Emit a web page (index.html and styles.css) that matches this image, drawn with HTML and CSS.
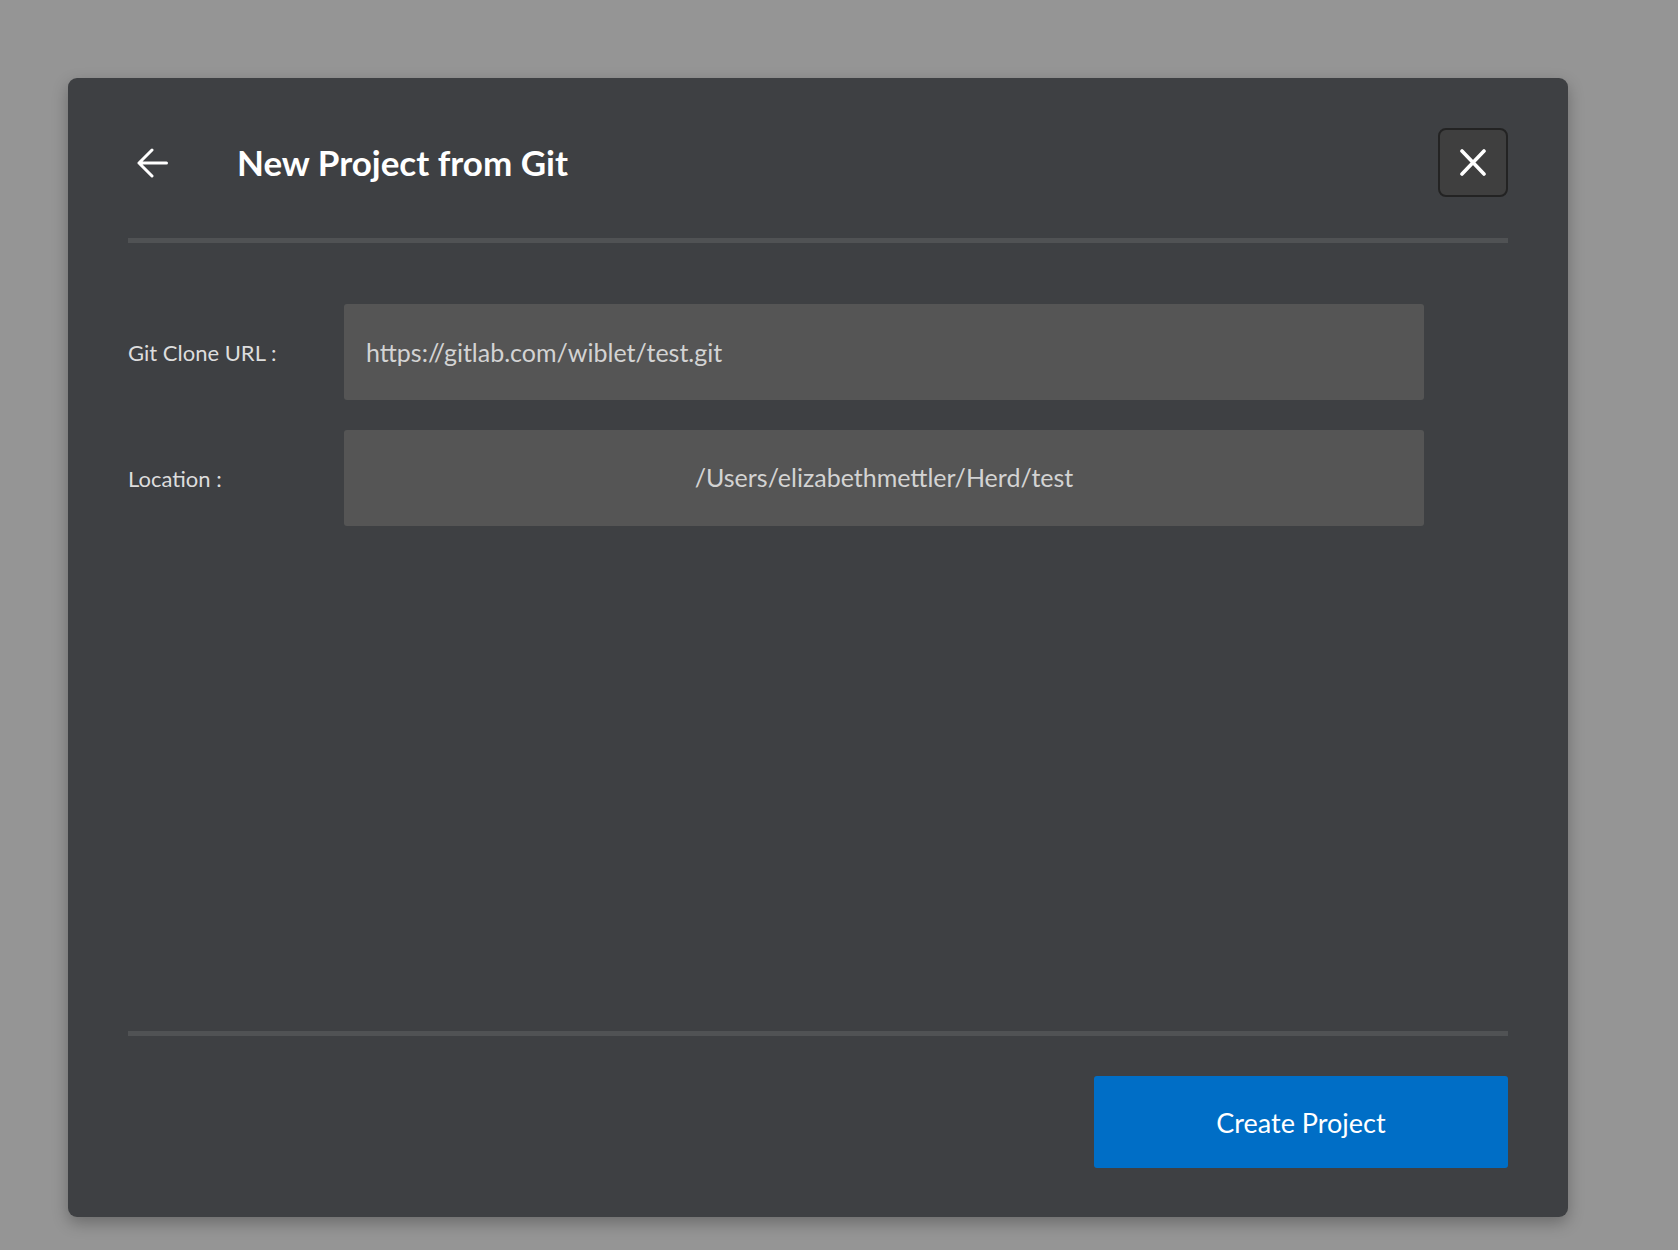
FILE: index.html
```html
<!DOCTYPE html>
<html lang="en">
<head>
<meta charset="utf-8">
<title>New Project from Git</title>
<link rel="stylesheet" href="styles.css">
</head>
<body>
<div class="modal">
  <div class="header">
    <button class="back" aria-label="Back">
      <svg width="31" height="30" viewBox="0 0 31 30"><path d="M2 15 H29.5 M15 2 L2 15 L15 28" fill="none" stroke="#ffffff" stroke-width="3" stroke-linecap="round" stroke-linejoin="round"/></svg>
    </button>
    <h1 class="title">New Project from Git</h1>
    <button class="close" aria-label="Close">
      <svg width="26" height="27" viewBox="0 0 26 27"><path d="M2 2 L24 25 M24 2 L2 25" fill="none" stroke="#ffffff" stroke-width="3.6" stroke-linecap="round"/></svg>
    </button>
  </div>
  <div class="divider top-divider"></div>
  <div class="form">
    <div class="row">
      <label class="label">Git Clone URL :</label>
      <div class="field">https://gitlab.com/wiblet/test.git</div>
    </div>
    <div class="row">
      <label class="label">Location :</label>
      <div class="field center">/Users/elizabethmettler/Herd/test</div>
    </div>
  </div>
  <div class="divider bottom-divider"></div>
  <div class="footer">
    <button class="create">Create Project</button>
  </div>
</div>
</body>
</html>
```
FILE: styles.css
```css
html, body {
  margin: 0;
  padding: 0;
  background: #959595;
  font-family: "Lato", "Open Sans", sans-serif;
}
body {
  padding-top: 78px;
  padding-left: 68px;
  height: 1250px;
  box-sizing: border-box;
  overflow: hidden;
}
.modal {
  width: 1500px;
  height: 1139px;
  box-sizing: border-box;
  background: #3e4043;
  border-radius: 9px;
  box-shadow: 0 6px 16px rgba(0, 0, 0, 0.28);
  padding: 50px 60px 49px 60px;
  display: flex;
  flex-direction: column;
}
.header {
  display: flex;
  align-items: center;
  height: 69px;
}
.back {
  background: none;
  border: 0;
  padding: 0;
  margin-left: 9px;
  width: 31px;
  height: 30px;
  display: flex;
  cursor: pointer;
}
.title {
  margin: -2px 0 0 69px;
  font-size: 35px;
  font-weight: 700;
  color: #ffffff;
  flex: 1;
  letter-spacing: 0;
}
.close {
  width: 70px;
  height: 69px;
  box-sizing: border-box;
  background: #3f3f3f;
  border: 2px solid #232323;
  border-radius: 8px;
  display: flex;
  align-items: center;
  justify-content: center;
  padding: 0;
  cursor: pointer;
}
.divider {
  height: 5px;
  background: #505254;
  flex: none;
}
.top-divider {
  margin-top: 41px;
}
.form {
  margin-top: 61px;
  display: flex;
  flex-direction: column;
  gap: 30px;
  flex: 1;
}
.row {
  display: flex;
  align-items: center;
}
.label {
  width: 216px;
  flex: none;
  color: #dddddd;
  font-size: 22px;
}
.field {
  width: 1080px;
  height: 96px;
  box-sizing: border-box;
  background: #555555;
  border-radius: 3px;
  padding: 0 22px;
  display: flex;
  align-items: center;
  color: #d3d3d3;
  font-size: 25px;
}
.field.center {
  justify-content: center;
  padding-bottom: 2px;
}
.footer {
  margin-top: 40px;
  display: flex;
  justify-content: flex-end;
}
.create {
  width: 414px;
  height: 92px;
  background: #006ec6;
  border: 0;
  border-radius: 3px;
  color: #ffffff;
  font-family: "Lato", "Open Sans", sans-serif;
  font-size: 27px;
  cursor: pointer;
}
```
